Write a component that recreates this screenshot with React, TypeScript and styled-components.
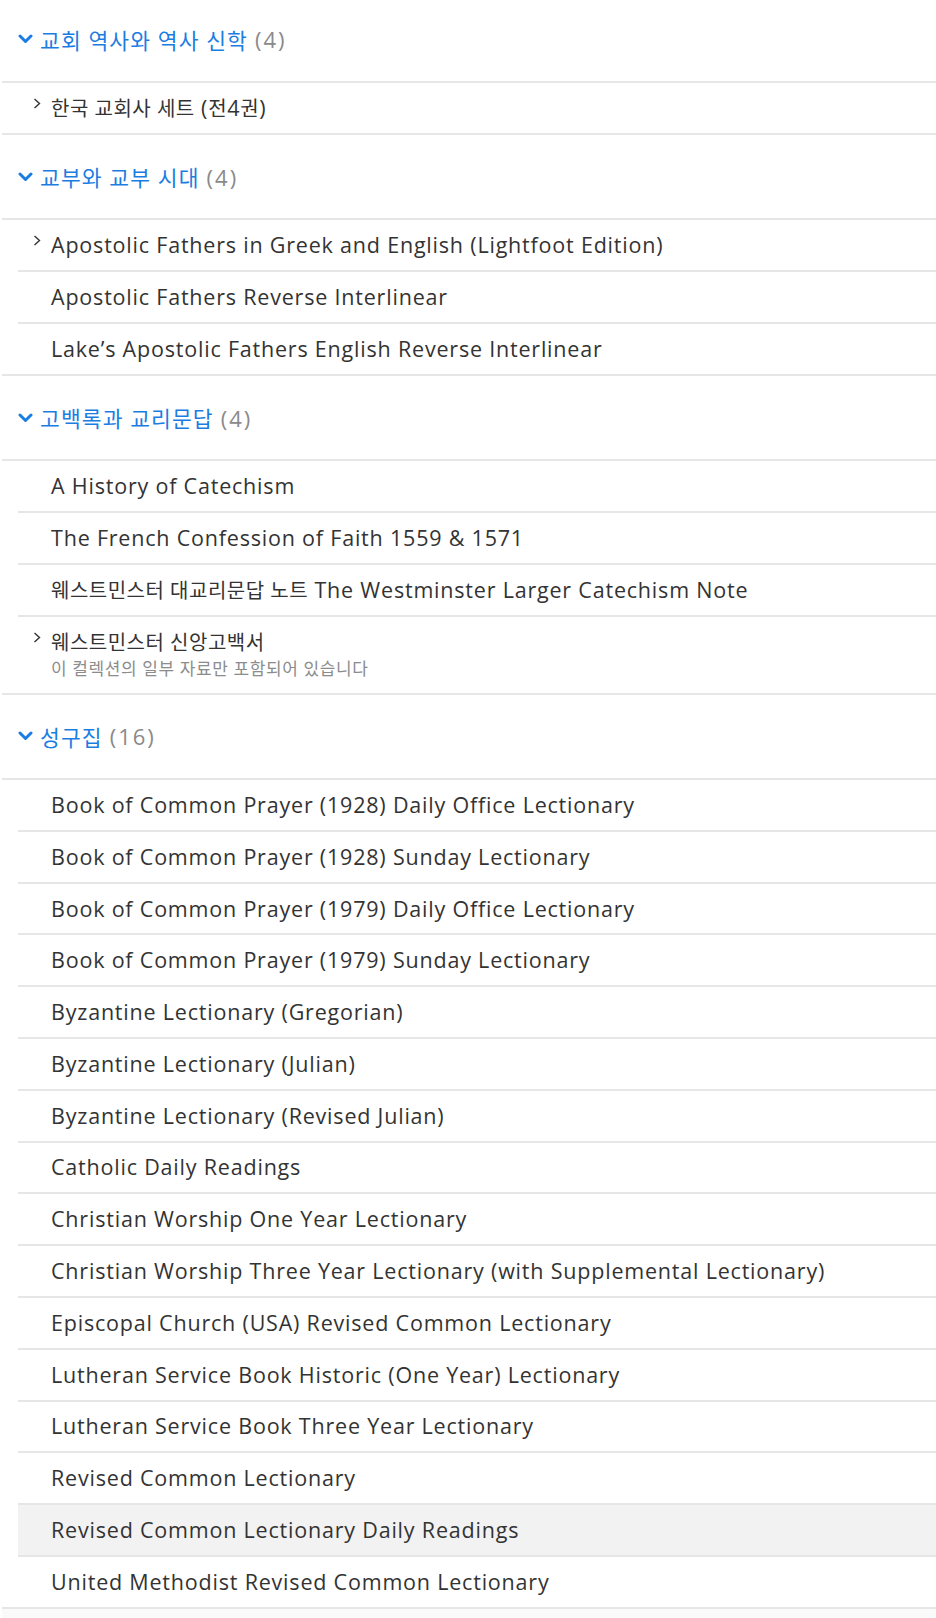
import { createGlobalStyle } from "styled-components";
import styled, { css } from "styled-components";

const GlobalStyle = createGlobalStyle`
  html, body {
    margin: 0;
    padding: 0;
    background: #ffffff;
  }
  body {
    font-family: "Open Sans", "Noto Sans CJK KR", sans-serif;
    -webkit-font-smoothing: antialiased;
  }
`;

const Page = styled.div`
  margin-top: -2.5px;
  padding-left: 2px;
  background: #ffffff;
`;

const Section = styled.section`
  border-bottom: 2px solid #e6e6e6;
`;

const Header = styled.div`
  display: flex;
  align-items: center;
  height: 83.6px;
  padding-left: 16px;
  border-bottom: 2px solid #e6e6e6;
  font-size: 21.5px;
  letter-spacing: 1.1px;
`;

const HeaderChevron = styled.svg`
  width: 15px;
  height: 10px;
  margin-right: 7px;
  flex-shrink: 0;
`;

const Title = styled.span`
  color: #1b7de2;
`;

const Count = styled.span`
  color: #8a8a8a;
  margin-left: 7px;
  font-size: 22px;
  letter-spacing: 2px;
`;

const List = styled.ul`
  list-style: none;
  margin: 0;
  padding: 0;
`;

const Item = styled.li<{ $active?: boolean }>`
  display: flex;
  align-items: flex-start;
  margin-left: 16px;
  padding: 12.9px 0 12.9px 15px;
  border-bottom: 2px solid #e6e6e6;
  color: #333333;
  font-size: 21.5px;
  line-height: 24px;
  letter-spacing: 0.8px;

  &:last-child {
    border-bottom: none;
  }

  ${(p) =>
    p.$active &&
    css`
      background: #f2f2f2;
    `}
`;

const ItemChevron = styled.svg<{ $hidden?: boolean }>`
  width: 8px;
  height: 11px;
  margin-top: 2px;
  margin-right: 10px;
  flex-shrink: 0;
  visibility: ${(p) => (p.$hidden ? "hidden" : "visible")};
`;

const ItemText = styled.div`
  display: flex;
  flex-direction: column;
`;

const Line = styled.span`
  display: block;
  height: 24px;
`;

// hangul runs sit a little tighter than the latin text around them
const Hangul = styled.span`
  font-size: 20px;
  line-height: 1;
  letter-spacing: 0.5px;
`;

const Sub = styled.span`
  margin-top: 4px;
  color: #8c8c8c;
  font-size: 17px;
  line-height: 22px;
  letter-spacing: 0.6px;
`;

const Footer = styled.div`
  height: 60px;
  background: #fafafa;
`;

type Entry = {
  title: string;
  expandable?: boolean;
  sub?: string;
  active?: boolean;
};

type Group = { name: string; count: number; items: Entry[] };

const groups: Group[] = [
  {
    name: "교회 역사와 역사 신학",
    count: 4,
    items: [{ title: "한국 교회사 세트 (전4권)", expandable: true }],
  },
  {
    name: "교부와 교부 시대",
    count: 4,
    items: [
      { title: "Apostolic Fathers in Greek and English (Lightfoot Edition)", expandable: true },
      { title: "Apostolic Fathers Reverse Interlinear" },
      { title: "Lake’s Apostolic Fathers English Reverse Interlinear" },
    ],
  },
  {
    name: "고백록과 교리문답",
    count: 4,
    items: [
      { title: "A History of Catechism" },
      { title: "The French Confession of Faith 1559 & 1571" },
      { title: "웨스트민스터 대교리문답 노트 The Westminster Larger Catechism Note" },
      {
        title: "웨스트민스터 신앙고백서",
        expandable: true,
        sub: "이 컬렉션의 일부 자료만 포함되어 있습니다",
      },
    ],
  },
  {
    name: "성구집",
    count: 16,
    items: [
      { title: "Book of Common Prayer (1928) Daily Office Lectionary" },
      { title: "Book of Common Prayer (1928) Sunday Lectionary" },
      { title: "Book of Common Prayer (1979) Daily Office Lectionary" },
      { title: "Book of Common Prayer (1979) Sunday Lectionary" },
      { title: "Byzantine Lectionary (Gregorian)" },
      { title: "Byzantine Lectionary (Julian)" },
      { title: "Byzantine Lectionary (Revised Julian)" },
      { title: "Catholic Daily Readings" },
      { title: "Christian Worship One Year Lectionary" },
      { title: "Christian Worship Three Year Lectionary (with Supplemental Lectionary)" },
      { title: "Episcopal Church (USA) Revised Common Lectionary" },
      { title: "Lutheran Service Book Historic (One Year) Lectionary" },
      { title: "Lutheran Service Book Three Year Lectionary" },
      { title: "Revised Common Lectionary" },
      { title: "Revised Common Lectionary Daily Readings", active: true },
      { title: "United Methodist Revised Common Lectionary" },
    ],
  },
];

function renderTitle(text: string) {
  const parts = text.split(/([\uAC00-\uD7A3]+(?:\s+[\uAC00-\uD7A3]+)*)/);
  return parts.map((part, i) =>
    /[\uAC00-\uD7A3]/.test(part) ? <Hangul key={i}>{part}</Hangul> : part
  );
}

export default function App() {
  return (
    <>
      <GlobalStyle />
      <Page>
        {groups.map((g) => (
          <Section key={g.name}>
            <Header>
              <HeaderChevron viewBox="0 0 15 10">
                <polyline
                  points="2,2 7.5,7.5 13,2"
                  fill="none"
                  stroke="#1b7de2"
                  strokeWidth="3"
                  strokeLinecap="round"
                  strokeLinejoin="round"
                />
              </HeaderChevron>
              <Title>{g.name}</Title>
              <Count>({g.count})</Count>
            </Header>
            <List>
              {g.items.map((e) => (
                <Item key={e.title} $active={e.active}>
                  <ItemChevron viewBox="0 0 8 11" $hidden={!e.expandable}>
                    <polyline
                      points="1.5,1 6.5,5.5 1.5,10"
                      fill="none"
                      stroke="#333"
                      strokeWidth="1.4"
                    />
                  </ItemChevron>
                  <ItemText>
                    <Line>{renderTitle(e.title)}</Line>
                    {e.sub && <Sub>{e.sub}</Sub>}
                  </ItemText>
                </Item>
              ))}
            </List>
          </Section>
        ))}
        <Footer />
      </Page>
    </>
  );
}
